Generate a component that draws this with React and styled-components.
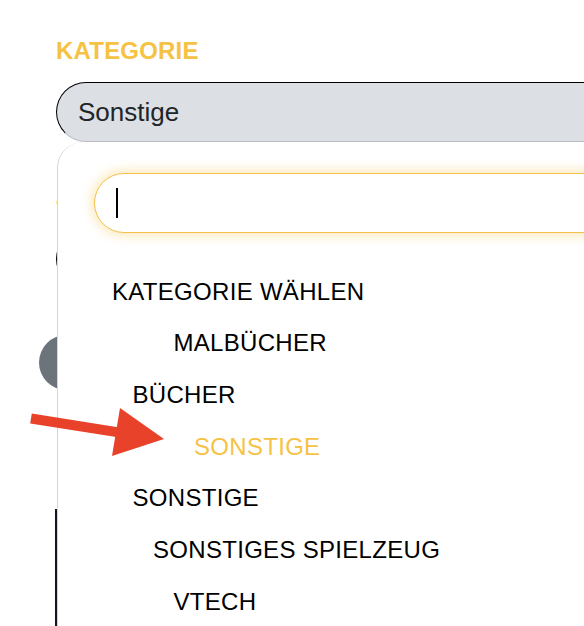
import React from "react";
import styled, { createGlobalStyle } from "styled-components";

const GlobalStyle = createGlobalStyle`
  html, body {
    margin: 0;
    overflow: hidden;
    background: #fff;
  }
  body {
    font-family: "Liberation Sans", Arial, sans-serif;
  }
`;

const Page = styled.div`
  position: relative;
  box-sizing: border-box;
  height: 626px;
  padding: 37px 0 0 56px;
  overflow: hidden;
`;

const Label = styled.div`
  margin-top: ${(p) => p.$gap || 0}px;
  color: #f6c244;
  font-weight: 700;
  font-size: 24px;
  line-height: 28px;
  letter-spacing: 0.2px;
`;

const SelectWrap = styled.div`
  position: relative;
  margin-top: 17px;
  z-index: 2;
`;

const Select = styled.div`
  box-sizing: border-box;
  display: flex;
  align-items: center;
  width: 640px;
  height: 60px;
  padding-left: 21px;
  background: #dcdfe3;
  border: 1px solid #000;
  border-bottom-color: #b9bdc3;
  border-radius: 30px 0 0 30px;
  color: #212529;
  font-size: 26px;
`;

const Pill = styled.div`
  box-sizing: border-box;
  width: 640px;
  height: 60px;
  margin-top: 19px;
  border: 1px solid #000;
  border-radius: 30px;
`;

const RoundButton = styled.div`
  width: 55px;
  height: 55px;
  margin: 46px 0 0 -17px;
  border-radius: 50%;
  background: #6c737b;
`;

const TextArea = styled.div`
  height: 200px;
  margin: 119px 0 0 -1px;
  border-left: 2px solid #121624;
`;

const Panel = styled.div`
  position: absolute;
  top: 100%;
  left: 1px;
  box-sizing: border-box;
  width: 620px;
  height: 520px;
  padding: 31px 0 0 36px;
  background: #fff;
  border-left: 1px solid #d5d5d5;
  border-top-left-radius: 26px;
`;

const Search = styled.div`
  box-sizing: border-box;
  display: flex;
  align-items: center;
  width: 580px;
  height: 60px;
  padding-left: 21px;
  background: #fff;
  border: 1px solid #f5c14a;
  border-radius: 30px 0 0 30px;
  box-shadow: 0 0 10px 4px rgba(246, 194, 68, 0.3);
`;

const Caret = styled.span`
  width: 2px;
  height: 30px;
  background: #000;
`;

const List = styled.ul`
  margin: 33px 0 0;
  padding: 0 0 0 18px;
  list-style: none;
`;

const Item = styled.li`
  display: flex;
  align-items: center;
  height: 51.67px;
  padding-left: ${(p) => p.$level * 20.5}px;
  color: ${(p) => (p.$active ? "#f6c244" : "#000")};
  font-size: 24px;
  letter-spacing: 0.3px;
  white-space: nowrap;
`;

const Arrow = styled.svg`
  position: absolute;
  left: 25px;
  top: 400px;
  z-index: 3;
`;

const options = [
  { label: "KATEGORIE WÄHLEN", level: 0 },
  { label: "MALBÜCHER", level: 3 },
  { label: "BÜCHER", level: 1 },
  { label: "SONSTIGE", level: 4, active: true },
  { label: "SONSTIGE", level: 1 },
  { label: "SONSTIGES SPIELZEUG", level: 2 },
  { label: "VTECH", level: 3 },
];

export default function App() {
  return (
    <>
      <GlobalStyle />
      <Page>
        <Label>KATEGORIE</Label>
        <SelectWrap>
          <Select>Sonstige</Select>
          <Panel>
            <Search>
              <Caret />
            </Search>
            <List>
              {options.map((o, i) => (
                <Item key={i} $level={o.level} $active={o.active}>
                  {o.label}
                </Item>
              ))}
            </List>
          </Panel>
        </SelectWrap>
        <Label $gap={40}>ZUSTAND</Label>
        <Pill />
        <RoundButton />
        <TextArea />
        <Arrow width="150" height="62" viewBox="25 400 150 62">
          <polygon points="31.8,413.6 125.7,428.4 124.1,438.3 30.2,423.4" fill="#e8432a" />
          <polygon points="120,408 164,439 112,456" fill="#e8432a" />
        </Arrow>
      </Page>
    </>
  );
}
